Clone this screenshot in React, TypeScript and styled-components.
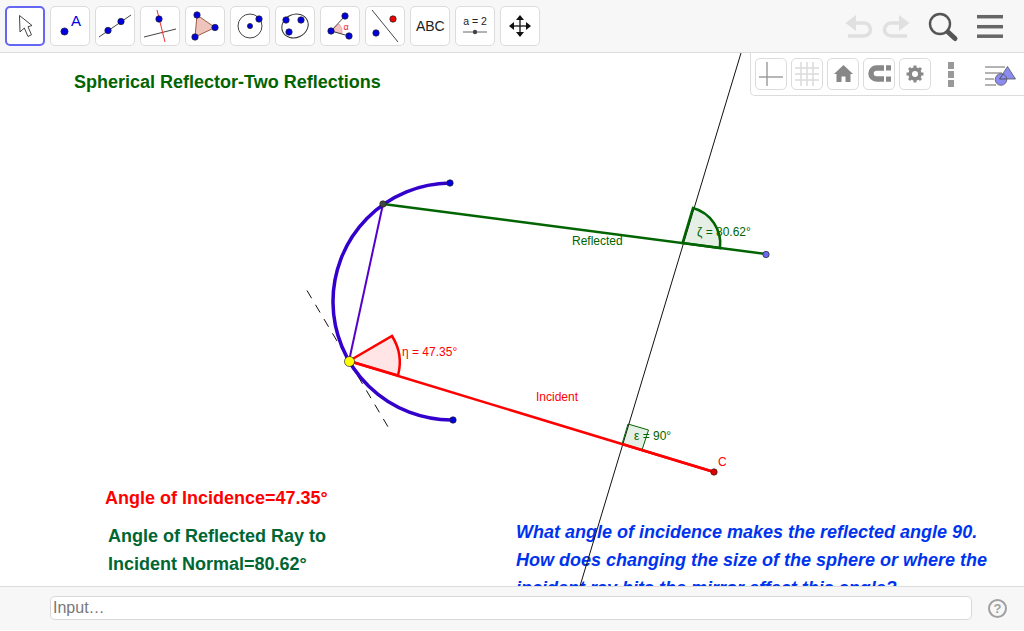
import React from "react";
import styled, { createGlobalStyle } from "styled-components";

const Global = createGlobalStyle`
  html, body { margin: 0; padding: 0; background: #fff; overflow: hidden; }
  body { font-family: "Liberation Sans", Arial, sans-serif; }
`;

const Page = styled.div`
  width: 1024px;
  height: 630px;
  display: flex;
  flex-direction: column;
`;

const Toolbar = styled.header`
  height: 53px;
  box-sizing: border-box;
  flex: none;
  display: flex;
  align-items: flex-start;
  justify-content: space-between;
  padding: 6px 0 0 5px;
  background: #f7f7f7;
  border-bottom: 1px solid #dcdcdc;
`;

const ToolGroup = styled.div`
  display: flex;
  gap: 5px;
`;

const ToolButton = styled.button<{ $active?: boolean }>`
  width: 40px;
  height: 40px;
  box-sizing: border-box;
  padding: 0;
  background: #fff;
  border: ${(p) => (p.$active ? "2px solid #6666f5" : "1px solid #dcdcdc")};
  border-radius: 5px;
  display: flex;
  align-items: center;
  justify-content: center;
`;

const Icon = styled.svg`
  display: block;
  flex: none;
`;

const Actions = styled.svg`
  display: block;
  flex: none;
  margin-top: -6px;
`;

const Canvas = styled.main`
  position: relative;
  flex: 1;
  overflow: hidden;
  background: #fff;
`;

const Drawing = styled.svg`
  position: absolute;
  left: 0;
  top: 0;
  display: block;
`;

const CanvasText = styled.div<{ $x: number; $y: number; $color: string; $size?: number; $italic?: boolean }>`
  position: absolute;
  left: ${(p) => p.$x}px;
  top: ${(p) => p.$y}px;
  color: ${(p) => p.$color};
  font-size: ${(p) => p.$size ?? 18}px;
  font-weight: bold;
  font-style: ${(p) => (p.$italic ? "italic" : "normal")};
  line-height: 28px;
  white-space: nowrap;
`;

const MathLabel = styled.div<{ $x: number; $y: number; $color: string }>`
  position: absolute;
  left: ${(p) => p.$x}px;
  top: ${(p) => p.$y}px;
  color: ${(p) => p.$color};
  font-size: 12px;
  line-height: 14px;
  white-space: nowrap;
`;

const StylePanel = styled.div`
  position: absolute;
  right: 0;
  top: 0;
  width: 274px;
  height: 43px;
  box-sizing: border-box;
  display: flex;
  align-items: flex-start;
  gap: 4px;
  padding: 5px 0 0 4px;
  background: #fff;
  border-left: 1px solid #dcdcdc;
  border-bottom: 1px solid #dcdcdc;
  border-bottom-left-radius: 5px;
`;

const StyleButton = styled.button`
  width: 32px;
  height: 32px;
  box-sizing: border-box;
  padding: 0;
  background: #fff;
  border: 1px solid #dcdcdc;
  border-radius: 5px;
  display: flex;
  align-items: center;
  justify-content: center;
`;

const MoreDots = styled.div`
  display: flex;
  flex-direction: column;
  gap: 2px;
  margin: 4px 0 0 13px;
`;

const Dot = styled.span`
  display: block;
  width: 6px;
  height: 7px;
  background: #999;
`;

const PanelToggle = styled.svg`
  display: block;
  flex: none;
  margin: 4px 0 0 27px;
`;

const InputBar = styled.footer`
  height: 44px;
  box-sizing: border-box;
  flex: none;
  display: flex;
  align-items: flex-start;
  padding: 9px 17px 0 50px;
  gap: 16px;
  background: #f7f7f7;
  border-top: 1px solid #dcdcdc;
`;

const InputField = styled.input`
  flex: 1;
  height: 24px;
  box-sizing: border-box;
  padding: 0 2px;
  background: #fff;
  border: 1px solid #d8d8d8;
  border-radius: 5px;
  font-family: "Liberation Sans", Arial, sans-serif;
  font-size: 16px;
  &::placeholder { color: #777; opacity: 1; }
`;

const Help = styled.div`
  width: 19px;
  height: 19px;
  box-sizing: border-box;
  margin-top: 3px;
  border: 2px solid #a0a0a0;
  border-radius: 50%;
  color: #a0a0a0;
  font-size: 13px;
  font-weight: bold;
  line-height: 15px;
  text-align: center;
`;

const BLUE = "#0000e0";
const Pt = ({ x, y, r = 3.2, fill = BLUE }: { x: number; y: number; r?: number; fill?: string }) => (
  <circle cx={x} cy={y} r={r} fill={fill} stroke="#222" strokeWidth={0.7} />
);

const Tool = ({ x, active, children }: { x: number; active?: boolean; children: React.ReactNode }) => {
  const b = active ? 2 : 1;
  const s = 40 - 2 * b;
  return (
    <ToolButton $active={active}>
      <Icon width={s} height={s} viewBox={`${x - 1 + b} ${6 + b} ${s} ${s}`}>{children}</Icon>
    </ToolButton>
  );
};

const StyleTool = ({ x, children }: { x: number; children: React.ReactNode }) => (
  <StyleButton>
    <Icon width={30} height={30} viewBox={`${x + 1} 59 30 30`}>{children}</Icon>
  </StyleButton>
);

export default function App() {
  return (
    <Page>
      <Global />
      <Toolbar>
        <ToolGroup>
          <Tool x={6} active>
            <path d="M19.5 15.5 L20 32 L24.3 28 L28 36.5 L31.5 34.8 L28 26.8 L32 25.5 Z" fill="#fff" stroke="#444" strokeWidth={1} strokeLinejoin="round" />
          </Tool>
          <Tool x={51}>
            <Pt x={64.5} y={31.5} r={3.6} />
            <text x={76} y={26} textAnchor="middle" fontFamily="Liberation Sans" fontSize={15} fill="#0000e0">A</text>
          </Tool>
          <Tool x={96}>
            <line x1={99} y1={37} x2={131} y2={15} stroke="#444" strokeWidth={1} />
            <Pt x={108} y={30.5} /><Pt x={121} y={21.5} />
          </Tool>
          <Tool x={141}>
            <line x1={144} y1={37} x2={176} y2={29} stroke="#444" strokeWidth={1} />
            <line x1={157} y1={10} x2={165} y2={42} stroke="#f03030" strokeWidth={1} />
            <Pt x={159} y={19} />
          </Tool>
          <Tool x={186}>
            <polygon points="197,15 215,27.5 195,37" fill="#eec4bc" stroke="#a05a48" strokeWidth={1} />
            <Pt x={197} y={15} /><Pt x={215} y={27.5} /><Pt x={195} y={37} />
          </Tool>
          <Tool x={231}>
            <circle cx={250} cy={26} r={12} fill="none" stroke="#444" strokeWidth={1} />
            <Pt x={250} y={26} r={2.6} /><Pt x={259} y={19} />
          </Tool>
          <Tool x={276}>
            <ellipse cx={295} cy={26} rx={13.5} ry={11.5} transform="rotate(-25 295 26)" fill="none" stroke="#333" strokeWidth={1} />
            <Pt x={286} y={20} /><Pt x={301} y={20} /><Pt x={289} y={32} />
          </Tool>
          <Tool x={321}>
            <path d="M331 31 L339 24 A11 11 0 0 1 342 33.5 Z" fill="#f4c4c4" stroke="#f09090" strokeWidth={0.7} />
            <line x1={331} y1={31} x2={345} y2={16} stroke="#444" strokeWidth={1} />
            <line x1={331} y1={31} x2={349} y2={36} stroke="#444" strokeWidth={1} />
            <text x={346} y={30} textAnchor="middle" fontFamily="Liberation Sans" fontSize={9} fill="#f02020">α</text>
            <Pt x={331} y={31} /><Pt x={345} y={16} /><Pt x={349} y={36} />
          </Tool>
          <Tool x={366}>
            <line x1={372} y1={10} x2={398} y2={42} stroke="#444" strokeWidth={1} />
            <Pt x={393} y={19} fill="#f00000" /><Pt x={376} y={33} />
          </Tool>
          <Tool x={411}>
            <text x={430.3} y={31} textAnchor="middle" fontFamily="Liberation Sans" fontSize={14} fill="#222">ABC</text>
          </Tool>
          <Tool x={456}>
            <text x={475} y={25} textAnchor="middle" fontFamily="Liberation Sans" fontSize={10.5} fill="#222">a = 2</text>
            <line x1={463} y1={32} x2={487} y2={32} stroke="#666" strokeWidth={1} />
            <circle cx={475} cy={32} r={2.2} fill="#444" />
          </Tool>
          <Tool x={501}>
            <line x1={510} y1={26} x2={530} y2={26} stroke="#222" strokeWidth={1.4} />
            <line x1={520} y1={16} x2={520} y2={36} stroke="#222" strokeWidth={1.4} />
            <path d="M520 15 L524 20 H516 Z M520 37 L524 32 H516 Z M509 26 L514 22 V30 Z M531 26 L526 22 V30 Z" fill="#111" />
          </Tool>
        </ToolGroup>
        <Actions width={180} height={52} viewBox="844 0 180 52">
          <g fill="none" stroke="#e0e0e0" strokeWidth={3.6}>
            <path d="M854 23 H864 A6.5 6.5 0 0 1 864 36 H848" />
            <path d="M901 23 H891 A6.5 6.5 0 0 0 891 36 H907" />
          </g>
          <path d="M845.5 23 L856 15 V31 Z M909.5 23 L899 15 V31 Z" fill="#e0e0e0" />
          <circle cx={940} cy={24} r={10} fill="none" stroke="#555" strokeWidth={2.4} />
          <line x1={948} y1={32} x2={955} y2={38.5} stroke="#555" strokeWidth={5} strokeLinecap="round" />
          <g stroke="#666" strokeWidth={3.5}>
            <line x1={977} y1={16.7} x2={1003} y2={16.7} />
            <line x1={977} y1={26.7} x2={1003} y2={26.7} />
            <line x1={977} y1={36.2} x2={1003} y2={36.2} />
          </g>
        </Actions>
      </Toolbar>

      <Canvas>
        <CanvasText $x={74} $y={15} $color="#006400">Spherical Reflector-Two Reflections</CanvasText>
        <CanvasText $x={105} $y={431} $color="#ff0000">Angle of Incidence=47.35°</CanvasText>
        <CanvasText $x={108} $y={469} $color="#006633">Angle of Reflected Ray to</CanvasText>
        <CanvasText $x={108} $y={497} $color="#006633">Incident Normal=80.62°</CanvasText>
        <CanvasText $x={516} $y={465} $color="#0033ee" $italic>What angle of incidence makes the reflected angle 90.</CanvasText>
        <CanvasText $x={516} $y={493} $color="#0033ee" $italic>How does changing the size of the sphere or where the</CanvasText>
        <CanvasText $x={516} $y={521} $color="#0033ee" $italic>incident ray hits the mirror effect this angle?</CanvasText>

        <Drawing width={1024} height={533} viewBox="0 53 1024 533">
          <line x1={741} y1={53} x2={580} y2={586} stroke="#111" strokeWidth={1} />
          <line x1={307} y1={290.5} x2={390.5} y2={431} stroke="#111" strokeWidth={1} strokeDasharray="9 7.6" />
          <path d="M450 183 A118.5 118.5 0 0 0 453 420" fill="none" stroke="#3300cc" strokeWidth={3.5} />
          <line x1={383} y1={204} x2={349} y2={361} stroke="#5500cc" strokeWidth={2} />
          <path d="M349 361 L392 336 A50 50 0 0 1 398 375.5 Z" fill="rgba(255,0,0,0.1)" stroke="#ff0000" strokeWidth={2.5} />
          <line x1={349} y1={361} x2={714} y2={472} stroke="#ff0000" strokeWidth={2.5} />
          <path d="M682.5 243 L693 208 A37 37 0 0 1 720 248 Z" fill="rgba(0,100,0,0.1)" stroke="#006400" strokeWidth={2.5} />
          <line x1={383} y1={204} x2={766} y2={254} stroke="#006400" strokeWidth={2.5} />
          <path d="M622 444 L628 424 L648.5 430 L642 450 Z" fill="rgba(0,100,0,0.1)" stroke="#006400" strokeWidth={1} />
          <line x1={622} y1={444} x2={714} y2={472} stroke="#ff0000" strokeWidth={2.5} />
          <Pt x={450} y={183} r={3.2} />
          <Pt x={453} y={420} r={3.2} />
          <Pt x={383} y={204} r={3.2} fill="#444" />
          <Pt x={349.5} y={361.5} r={5} fill="#ffff00" />
          <Pt x={766} y={254.5} r={3.2} fill="#6a6af0" />
          <Pt x={714} y={472} r={3.2} fill="#e00000" />
        </Drawing>

        <MathLabel $x={572} $y={181} $color="#006400">Reflected</MathLabel>
        <MathLabel $x={536} $y={337} $color="#ff0000">Incident</MathLabel>
        <MathLabel $x={402} $y={292} $color="#ff0000">η = 47.35°</MathLabel>
        <MathLabel $x={697} $y={172} $color="#006400">ζ = 80.62°</MathLabel>
        <MathLabel $x={634} $y={376} $color="#006400">ε = 90°</MathLabel>
        <MathLabel $x={718} $y={402} $color="#ff0000">C</MathLabel>

        <StylePanel>
          <StyleTool x={755}>
            <g stroke="#999" strokeWidth={1.4}>
              <line x1={759} y1={77} x2={783} y2={77} />
              <line x1={767} y1={62} x2={767} y2={86} />
            </g>
          </StyleTool>
          <StyleTool x={791}>
            <g stroke="#dcdcdc" strokeWidth={1.6}>
              <line x1={801} y1={62} x2={801} y2={86} />
              <line x1={807} y1={62} x2={807} y2={86} />
              <line x1={813} y1={62} x2={813} y2={86} />
              <line x1={795} y1={68} x2={819} y2={68} />
              <line x1={795} y1={74} x2={819} y2={74} />
              <line x1={795} y1={80} x2={819} y2={80} />
            </g>
          </StyleTool>
          <StyleTool x={827}>
            <path d="M843.5 65 L853 74 H850.5 V82 H845.5 V76.5 H841.5 V82 H836.5 V74 H834 Z" fill="#888" />
          </StyleTool>
          <StyleTool x={863}>
            <path d="M884 68 H876.5 A5.5 5.5 0 0 0 876.5 79 H884" fill="none" stroke="#888" strokeWidth={5.5} />
            <path d="M886 65.3 H891 V70.5 H886 Z M886 76.5 H891 V81.7 H886 Z" fill="#888" />
          </StyleTool>
          <StyleTool x={899}>
            <circle cx={915} cy={74} r={5} fill="none" stroke="#888" strokeWidth={3.4} />
            <g stroke="#888" strokeWidth={3}>
              <line x1={915} y1={65.5} x2={915} y2={82.5} />
              <line x1={906.5} y1={74} x2={923.5} y2={74} />
              <line x1={909} y1={68} x2={921} y2={80} />
              <line x1={921} y1={68} x2={909} y2={80} />
            </g>
            <circle cx={915} cy={74} r={3} fill="#fff" />
          </StyleTool>
          <MoreDots><Dot /><Dot /><Dot /></MoreDots>
          <PanelToggle width={32} height={26} viewBox="985 60 32 26">
            <g stroke="#a0a0a0" strokeWidth={1.6}>
              <line x1={985} y1={65} x2={1005} y2={65} />
              <line x1={985} y1={71} x2={1002} y2={71} />
              <line x1={985} y1={77} x2={994} y2={77} />
              <line x1={985} y1={83} x2={996} y2={83} />
            </g>
            <path d="M1007.5 64.5 L1015.5 77 H999.5 Z" fill="#8c8cf0" stroke="#555" strokeWidth={0.8} />
            <circle cx={1001} cy={77.5} r={5.8} fill="#8c8cf0" stroke="#555" strokeWidth={0.8} />
            <path d="M1003 72 L999.5 77 H1006.5" fill="none" stroke="#444" strokeWidth={0.8} />
          </PanelToggle>
        </StylePanel>
      </Canvas>

      <InputBar>
        <InputField placeholder="Input…" />
        <Help>?</Help>
      </InputBar>
    </Page>
  );
}
